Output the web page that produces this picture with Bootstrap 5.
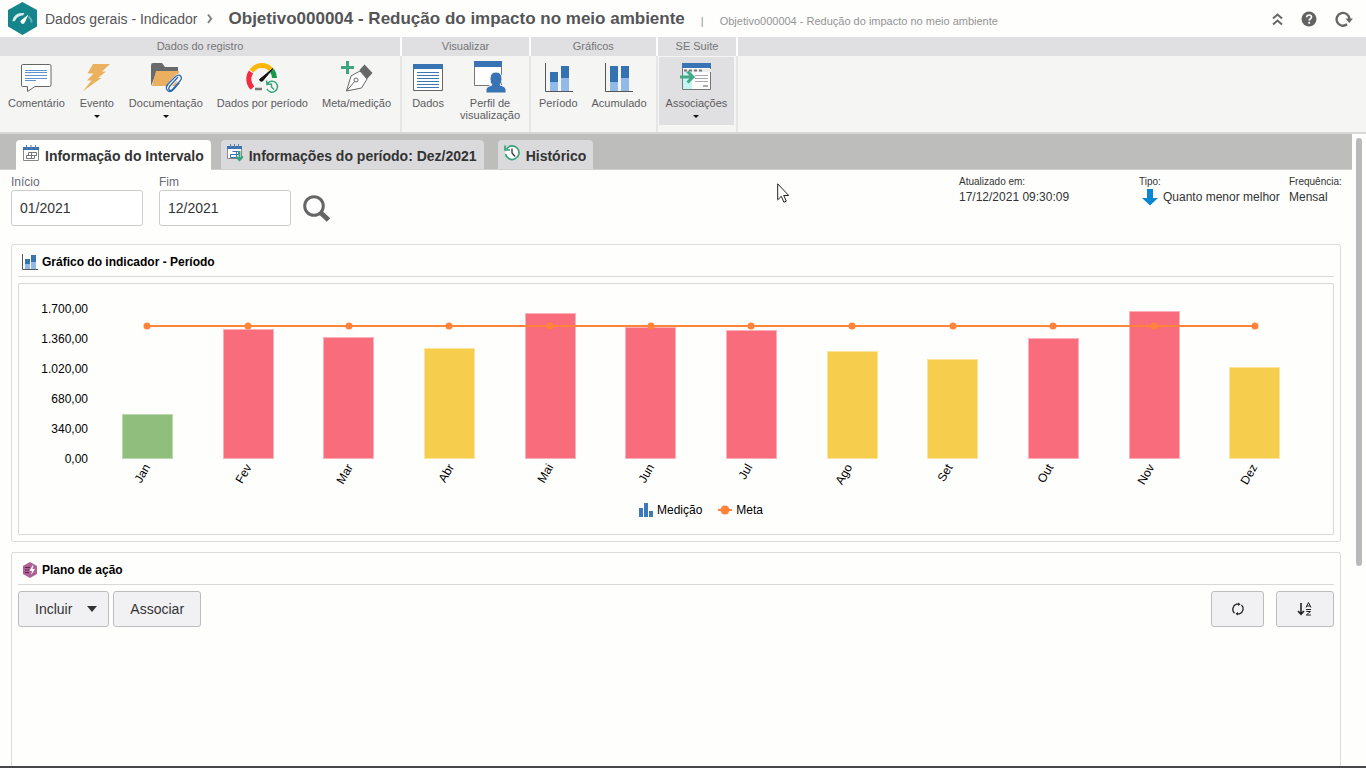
<!DOCTYPE html>
<html lang="pt-BR">
<head>
<meta charset="utf-8">
<meta name="viewport" content="width=device-width, initial-scale=1">
<title>Dados gerais - Indicador</title>
<link href="https://cdn.jsdelivr.net/npm/bootstrap@5.3.0/dist/css/bootstrap.min.css" rel="stylesheet">
<style>
body{font-family:"Liberation Sans",Arial,sans-serif;font-size:12px;line-height:16px;color:#333;background:#fefefd}
svg{display:block;flex:none}
a{color:inherit;text-decoration:none}
.btn{--bs-btn-font-size:14px;--bs-btn-line-height:20px;--bs-btn-border-radius:3px}
/* top bar */
.topbar{height:37px;padding:0 13px 0 8px;color:#555558}
.topbar-tools{gap:18px}
.crumb{font-size:14px;line-height:20px;padding:0 8px}
.page-title{font-size:17px;line-height:20px;font-weight:700;margin:1px 0 0 15px;color:#555557}
.page-sub{font-size:11px;color:#939394;padding-top:5px;gap:16px;margin-left:16px}
.tool-btn{border:0;background:none;padding:0}
/* ribbon */
.ribbon{background:#f5f5f4;height:97px;border-bottom:2px solid #d7d7d7}
.ribbon-title{height:19px;background:#e0e0e2;color:#757577;font-size:11px;line-height:19px;text-align:center;border-right:2px solid #fdfdfd}
.ribbon-items{padding:1px 2px 1px 1px;border-right:2px solid #e6e6e6}
.ribbon-fill .ribbon-title{border-right:0}
.ribbon-btn{border:0;background:none;border-radius:0;min-width:50px;height:68px;padding:3px 7px 0;font-size:11px;line-height:12px;color:#5c5c5e}
.ribbon-btn svg.pic{margin-bottom:2px}
.ribbon-btn.active{background:#e0dfe1}
.tri{width:0;height:0;border:3px solid transparent;border-top-color:#111;border-bottom:0;margin-top:6px}
/* tabs */
.tabband{height:36px;background:#bdbdbb;padding-left:16px;gap:10px;border-bottom:1px solid #cfcfce}
.tabband .nav-link{height:29px;padding:0 7px 0 6px;gap:6px;border-radius:4px 4px 0 0;background:#dadadc;color:#333;font-size:14px;font-weight:700;line-height:32px}
.tabband .nav-link.active{height:30px;background:#fefefd;margin-bottom:-1px;padding-left:7px}
/* filter */
.sheet{padding:4px 11px 0;gap:10px}
.filters{gap:16px;height:60px}
.field-label{line-height:16px;color:#6a6a78;display:block}
.date-box{width:132px;height:36px;border:1px solid #ccc;border-radius:3px;font-size:14px;padding:0 8px;color:#333}
.find-btn{margin:20px 0 0 -6px}
.meta-item dt{font-size:10px;font-weight:400;line-height:15px}
.meta-item dd{margin:0;line-height:17px}
.w-upd{width:180px}.w-tipo{width:150px}.w-freq{width:52px;white-space:nowrap}
/* panels */
.panel{border:1px solid #dcdada;border-radius:3px;background:#fefefd;padding:0 6px}
.panel-head{height:32px;border-bottom:1px solid #d9d9d9;padding:3px 0 0 4px;gap:4px;font-size:12px;font-weight:700;color:#000;margin:0}
.chart-box{border:1px solid #d9d9d9;border-radius:2px;margin:6px 0;padding:17px 28px 16px 0;color:#000}
.y-axis{width:78px;padding-right:9px;text-align:right}
.y-axis span{line-height:16px;height:30px}
.y-axis span:last-child{height:16px}
.plot{height:150px;margin-top:8px}
.goal{left:calc(100%/24);right:calc(100%/24);height:2px;background:#ff8338;transform:translateY(50%)}
.dot{left:50%;width:7px;height:7px;border-radius:50%;background:#ff8338;transform:translate(-50%,50%)}
.bar{width:51px;border:1px solid #fbb0ba;background:#f86c7c}
.bar.ok{background:#8fbe7d;border-color:#bcd8b0}
.bar.warn{background:#f7cd4d;border-color:#fbe3a0}
.month{width:50%;text-align:right;line-height:12px;height:43px}
.month span{display:block;transform:rotate(-60deg);transform-origin:100% 50%}
.legend-row{gap:16px;margin-left:78px}
.action-row{padding-top:6px}
.btn-tool{--bs-btn-bg:#f1f1f4;--bs-btn-border-color:#bdbdc0;--bs-btn-color:#333;--bs-btn-padding-x:16px;--bs-btn-padding-y:7px;--bs-btn-hover-bg:#e6e6ea;height:36px}
.btn-inc{padding-right:11px}
.tri-lg{width:0;height:0;border:5px solid transparent;border-top:6px solid #333;border-bottom:0;margin-left:15px}
.w-ref{width:53px;padding:0}.w-sort{width:58px;padding:0}
.scroller{width:14px;padding:4px 4px 200px}
.thumb{width:6px;border-radius:3px;background:#b9b9bc}
.statusline{height:2px;background:#47484a}
.pointer{position:fixed;left:777px;top:183px;pointer-events:none}
</style>
</head>
<body class="vh-100 d-flex flex-column overflow-hidden">
<header class="topbar d-flex align-items-center flex-shrink-0">
  <svg width="29" height="33" viewBox="0 0 29 33"><path d="M14.500 0 29 8v16.500L14.500 33 0 24.500V8z" fill="#15858c"/><path d="M4.500 19.500C5 14 9 11 13.500 11h3L15 13.500C11 13.500 8 16 7 19z" fill="#d5edef"/><path d="M13 21c-1-1.500-.5-2.500 1-3.500l6.500-5-3.500 7.500c-1 2-2.500 2.500-4 1z" fill="#fff"/><path d="M20.500 14.500c2 1.500 3 3.500 3 6" fill="none" stroke="#66b3b8" stroke-width="2"/></svg>
  <a href="#" class="crumb">Dados gerais - Indicador</a>
  <svg width="8" height="12" viewBox="0 0 8 12"><path d="m2 1.500 3.200 4.200L2 10" fill="none" stroke="#858587" stroke-width="2"/></svg>
  <h1 class="page-title text-nowrap">Objetivo000004 - Redução do impacto no meio ambiente</h1>
  <div class="page-sub d-flex text-nowrap"><span>|</span><span>Objetivo000004 - Redução do impacto no meio ambiente</span></div>
  <div class="topbar-tools ms-auto d-flex align-items-center">
    <button class="tool-btn" aria-label="Recolher"><svg width="11" height="14" viewBox="0 0 11 14"><path d="M1 6.500 5.500 2.500 10 6.500M1 12.500 5.500 8.500 10 12.500" fill="none" stroke="#666" stroke-width="2"/></svg></button>
    <button class="tool-btn" aria-label="Ajuda"><svg width="16" height="16" viewBox="0 0 16 16"><circle cx="8" cy="8" r="7.500" fill="#636363"/><path d="M5.700 6.200C5.800 4.500 7 4 8.100 4c1.300 0 2.400.7 2.400 2.100 0 1.600-2.300 1.700-2.300 3.500M8.200 10.800v2" fill="none" stroke="#fff" stroke-width="1.700"/></svg></button>
    <button class="tool-btn" aria-label="Atualizar"><svg width="18" height="16" viewBox="0 0 18 16"><path d="M12 13.300A6.400 6.400 0 1 1 14.400 8" fill="none" stroke="#666" stroke-width="2.400"/><path d="M10.500 7.500h7.500l-3.800 4.500z" fill="#666"/></svg></button>
  </div>
</header>

<nav class="ribbon d-flex flex-shrink-0" aria-label="Ações">
  <section class="d-flex flex-column">
    <div class="ribbon-title">Dados do registro</div>
    <div class="ribbon-items d-flex flex-grow-1">
      <button class="ribbon-btn d-flex flex-column align-items-center"><svg class="pic" width="36" height="35" viewBox="0 0 36 35"><path d="M4.500 4.500h27q1.500 0 1.500 1.500v19q0 1.500-1.500 1.500H17L9.500 31.500v-5h-5Q3.500 26.500 3.500 25V6q0-1.500 1-1.500z" fill="#fff" stroke="#666"/><path d="M7 10.500h22M7 12.500h22M7 15.500h22M7 18.500h22M7 20.500h11" stroke="#5f95cc"/></svg>Comentário</button>
      <button class="ribbon-btn d-flex flex-column align-items-center"><svg class="pic" width="36" height="35" viewBox="0 0 36 35"><path d="M14 4h17l-8 7.500h4l-8 6.500h3.500L4 31l8.500-10.500H8l6.500-7H8.500z" fill="#eab15f"/></svg>Evento<span class="tri"></span></button>
      <button class="ribbon-btn d-flex flex-column align-items-center"><svg class="pic" width="36" height="35" viewBox="0 0 36 35"><path d="M3 26V5q0-2 2-2h9l3 4h13v4H9z" fill="#6a6a6a"/><path d="M8 11h23l-3 15H4z" fill="#eab060"/><path d="m31 16-10 11q-2 3 0 4.500t4-1l7.500-8.500q2-3 0-5.500-2.500-2-5 .500l-7 7.500" fill="none" stroke="#fff" stroke-width="3"/><path d="m30 17-8.500 9.500q-1.500 2.500 0 3.500t3-.500l7.500-8.500q2.500-3 .500-5t-5 .500L20 24q-3 4-.500 6.500 3 2.500 6-1l6-7" fill="none" stroke="#2c66ac" stroke-width="1.300"/></svg>Documentação<span class="tri"></span></button>
      <button class="ribbon-btn d-flex flex-column align-items-center"><svg class="pic" width="36" height="35" viewBox="0 0 36 35"><path d="M8.500 28A12.500 12.500 0 0 1 7 12" fill="none" stroke="#f22b40" stroke-width="5"/><path d="M7.500 11A12.500 12.500 0 0 1 27 9.500" fill="none" stroke="#fcb608" stroke-width="5"/><path d="M28 10.500q2.500 3.500 2.500 7.500" fill="none" stroke="#179a49" stroke-width="5"/><path d="M29 8.500 18.500 21q-2.500 1-3-1.500z" fill="#111" stroke="#111"/><path d="M11 29h7" stroke="#777" stroke-width="2.500"/><circle cx="28" cy="26.500" r="7.500" fill="#f5f5f4"/><path d="M23.500 23.500A5.500 5.500 0 1 1 23 29M22.500 20.500l.5 4 4-.5" fill="none" stroke="#35a37c" stroke-width="1.400"/><path d="M27.500 23.500v3.500l2.500 2.500" fill="none" stroke="#35a37c" stroke-width="1.400"/></svg>Dados por período</button>
      <button class="ribbon-btn d-flex flex-column align-items-center"><svg class="pic" width="36" height="35" viewBox="0 0 36 35"><path d="M8.500 1v13M2 7.500h13" stroke="#3fa57e" stroke-width="3"/><path d="M7.500 31 12 16l9-5 7 8-5.500 9z" fill="#fff" stroke="#666"/><path d="m7.500 31 8.500-10" stroke="#666"/><circle cx="17" cy="20" r="2" fill="#fff" stroke="#666"/><path d="m20.500 10 5-5.500L33.500 13 28 19z" fill="#676767"/></svg>Meta/medição</button>
    </div>
  </section>
  <section class="d-flex flex-column">
    <div class="ribbon-title">Visualizar</div>
    <div class="ribbon-items d-flex flex-grow-1">
      <button class="ribbon-btn d-flex flex-column align-items-center"><svg class="pic" width="36" height="35" viewBox="0 0 36 35"><path d="M3.500 4.500h29v26h-29z" fill="#fff" stroke="#666"/><path d="M3 4h30v5H3z" fill="#3874b4"/><path d="M7 12.500h22M7 15.500h22M7 18.500h22M7 21.500h22M7 24.500h22M7 27.500h22" stroke="#3b78b8"/></svg>Dados</button>
      <button class="ribbon-btn d-flex flex-column align-items-center"><svg class="pic" width="36" height="35" viewBox="0 0 36 35"><path d="M2.500 2.500h27v23h-27z" fill="#fff" stroke="#777"/><path d="M2 1h28v6H2z" fill="#3874b4"/><path d="M14 33v-4q1-3 6-4-2-2-2-6 0-7 6-7t6 7q0 4-2 6 5 1 6 4v4z" fill="#3874b4" stroke="#f5f5f4"/></svg>Perfil de<br>visualização</button>
    </div>
  </section>
  <section class="d-flex flex-column">
    <div class="ribbon-title">Gráficos</div>
    <div class="ribbon-items d-flex flex-grow-1">
      <button class="ribbon-btn d-flex flex-column align-items-center"><svg class="pic" width="36" height="35" viewBox="0 0 36 35"><path d="M5.500 3v28.500H33" fill="none" stroke="#555"/><path d="M10 12h8v10h-8zM21 6h8v12h-8z" fill="#3572b2"/><path d="M10 22h8v9h-8zM21 18h8v13h-8z" fill="#92bae8"/></svg>Período</button>
      <button class="ribbon-btn d-flex flex-column align-items-center"><svg class="pic" width="36" height="35" viewBox="0 0 36 35"><path d="M4.500 3v28.500H32" fill="none" stroke="#555"/><path d="M9 6h8v16H9zM20 6h8v12h-8z" fill="#3572b2"/><path d="M9 22h8v9H9zM20 18h8v13h-8z" fill="#92bae8"/></svg>Acumulado</button>
    </div>
  </section>
  <section class="d-flex flex-column">
    <div class="ribbon-title">SE Suite</div>
    <div class="ribbon-items d-flex flex-grow-1">
      <button class="ribbon-btn active d-flex flex-column align-items-center"><svg class="pic" width="36" height="35" viewBox="0 0 36 35"><path d="M4.500 4.500h28v25h-28z" fill="#fff" stroke="#777"/><path d="M4 3h29v5H4z" fill="#3874b4"/><path d="M5 9h28v3H5z" fill="#ececec"/><path d="M6 10.500h20" stroke="#777" stroke-width="2" stroke-dasharray="3 2"/><path d="M5 12h9v17H5z" fill="#c4f4f3"/><path d="M17 15.500h13M17 18.500h13M17 21.500h13" stroke="#aaa"/><path d="M25 26h5" stroke="#aaa" stroke-width="2"/><path d="M2 17h12M9.500 11.500l5.500 5.500-5.500 5.500" fill="none" stroke="#42a984" stroke-width="3"/></svg>Associações<span class="tri"></span></button>
    </div>
  </section>
  <section class="ribbon-fill flex-grow-1"><div class="ribbon-title"></div></section>
</nav>

<div class="d-flex flex-grow-1 overflow-hidden">
  <main class="d-flex flex-column flex-grow-1 overflow-hidden">
    <div class="nav tabband d-flex flex-nowrap align-items-end flex-shrink-0" role="tablist">
      <a href="#" class="nav-link active d-flex" role="tab"><svg class="mt-1" width="16" height="20" viewBox="0 0 16 20"><path d="M.5 4.500h15v12H.5z" fill="#fff" stroke="#888"/><path d="M0 3h16v3H0z" fill="#3874b4"/><path d="M3.500 1v4M12.500 1v4M8 1v4" stroke="#5a7fa8"/><path d="M5.500 8.500h8v3h-8zM3.500 11.500h8v3h-8zM8.500 8.500v6" fill="none" stroke="#777"/></svg>Informação do Intervalo</a>
      <a href="#" class="nav-link d-flex" role="tab"><svg class="mt-1" width="16" height="20" viewBox="0 0 16 20"><path d="M.5 3.500h14v11H.5z" fill="#fff" stroke="#888"/><path d="M0 2h15v3H0z" fill="#3874b4"/><path d="M3.500 0v4M11.500 0v4M7.500 0v4" stroke="#5a7fa8"/><path d="M5.500 7.500h6v3h-8v3h6v-6" fill="none" stroke="#3874b4"/><path d="M12.500 7v9M9 12.500l3.500 3.500 3.500-3.500" fill="none" stroke="#35a37c" stroke-width="2"/></svg>Informações do período: Dez/2021</a>
      <a href="#" class="nav-link d-flex ms-1" role="tab"><svg class="mt-1" width="16" height="20" viewBox="0 0 16 20"><circle cx="8.500" cy="9" r="7" fill="#fff"/><path d="M2.500 5a6.800 6.800 0 1 1-1 5M1 1.500v4.500h5" fill="none" stroke="#35a37c" stroke-width="1.700"/><path d="M8 4.500V9l3 3.500" fill="none" stroke="#333" stroke-width="1.300"/></svg>Histórico</a>
    </div>
    <div class="sheet d-flex flex-column flex-grow-1">
      <form class="filters d-flex align-items-start">
        <div><label class="field-label" for="ini">Início</label><input id="ini" class="date-box" value="01/2021"></div>
        <div><label class="field-label" for="fim">Fim</label><input id="fim" class="date-box" value="12/2021"></div>
        <button type="button" class="tool-btn find-btn" aria-label="Pesquisar"><svg width="30" height="30" viewBox="0 0 30 30"><circle cx="13" cy="12" r="9.300" fill="#fff" stroke="#666" stroke-width="3"/><path d="m20 19 7.500 7" stroke="#666" stroke-width="5"/></svg></button>
        <dl class="d-flex ms-auto mb-0 meta-item">
          <div class="w-upd"><dt>Atualizado em:</dt><dd>17/12/2021 09:30:09</dd></div>
          <div class="w-tipo"><dt>Tipo:</dt><dd class="d-flex gap-1"><svg width="20" height="17" viewBox="0 0 20 17"><path d="M8 0h6v9h5l-8 7.500L3 9h5z" fill="#0a86d2"/></svg>Quanto menor melhor</dd></div>
          <div class="w-freq"><dt>Frequência:</dt><dd>Mensal</dd></div>
        </dl>
      </form>
      <section class="panel">
        <h2 class="panel-head d-flex align-items-center"><svg width="16" height="16" viewBox="0 0 16 16"><path d="M.5 0v15.500H16" fill="none" stroke="#555"/><path d="M3 5h5v6H3zM9 1h5v8H9z" fill="#3874b4"/><path d="M3 10h5v5H3zM9 8h5v7H9z" fill="#92bae8"/></svg>Gráfico do indicador - Período</h2>
        <div class="chart-box">
          <div class="d-flex">
            <div class="y-axis d-flex flex-column"><span>1.700,00</span><span>1.360,00</span><span>1.020,00</span><span>680,00</span><span>340,00</span><span>0,00</span></div>
            <div class="flex-grow-1">
              <div id="plot" class="plot d-flex position-relative"></div>
              <div id="months" class="d-flex"></div>
            </div>
          </div>
          <div class="legend-row d-flex justify-content-center">
            <span class="d-flex align-items-center gap-1"><svg width="14" height="14" viewBox="0 0 14 14"><path d="M0 5h4v9H0zM5 0h4v14H5zM10 8h4v6h-4z" fill="#3c7abc"/></svg>Medição</span>
            <span class="d-flex align-items-center gap-1"><svg width="14" height="10" viewBox="0 0 14 10"><path d="M0 5h14" stroke="#ff8338" stroke-width="2"/><circle cx="7" cy="5" r="4.500" fill="#ff8338"/></svg>Meta</span>
          </div>
        </div>
      </section>
      <section class="panel flex-grow-1 border-bottom-0 rounded-bottom-0">
        <h2 class="panel-head d-flex align-items-center"><svg width="16" height="16" viewBox="0 0 16 16"><path d="m8 0 7 4v8l-7 4-7-4V4z" fill="#ad6197"/><path d="M3 5.500h5M3 8h4M3 10.500h4" stroke="#5e2450"/><path d="M10.500 3.500 7.500 9H10l-1 4 4-6h-2.500l1-3.500z" fill="#fff"/></svg>Plano de ação</h2>
        <div class="action-row d-flex gap-1">
          <button class="btn btn-tool btn-inc d-flex align-items-center">Incluir<span class="tri-lg"></span></button>
          <button class="btn btn-tool">Associar</button>
          <button class="btn btn-tool w-ref d-flex align-items-center justify-content-center ms-auto" aria-label="Atualizar"><svg width="14" height="14" viewBox="0 0 14 14"><path d="M3.500 11A5.200 5.200 0 0 1 5.500 2.200h2M10.500 3A5.200 5.200 0 0 1 8.500 11.800h-2" fill="none" stroke="#222" stroke-width="1.300"/><path d="M7 .5v3.600l2.600-1.800zM7 9.900v3.600l-2.600-1.800z" fill="#222"/></svg></button>
          <button class="btn btn-tool w-sort d-flex align-items-center justify-content-center ms-2" aria-label="Ordenar"><svg width="16" height="14" viewBox="0 0 16 14"><path d="M4 1v11M1 9l3 3.300L7 9" fill="none" stroke="#222" stroke-width="1.600"/><path d="m9 5.500 2.500-5 2.500 5M9.800 4h3.400M9 7.500h5M9.300 9.500h4.200L9.300 13h4.700" fill="none" stroke="#222"/></svg></button>
        </div>
      </section>
    </div>
  </main>
  <div class="scroller d-flex" aria-hidden="true"><div class="thumb"></div></div>
</div>
<div class="statusline flex-shrink-0"></div>
<svg class="pointer" width="13" height="21" viewBox="0 0 13 21"><path d="M.7.8v16l3.600-3.500 2.600 5.900 2.400-1-2.600-5.700h5z" fill="#fff" stroke="#222"/></svg>
<script src="https://cdn.jsdelivr.net/npm/bootstrap@5.3.0/dist/js/bootstrap.bundle.min.js"></script>
<script>
const MAX=1700, GOAL=1510;
const data=[['Jan',510,'ok'],['Fev',1470,''],['Mar',1380,''],['Abr',1255,'warn'],['Mai',1655,''],['Jun',1500,''],['Jul',1460,''],['Ago',1225,'warn'],['Set',1130,'warn'],['Out',1370,''],['Nov',1675,''],['Dez',1040,'warn']];
const pct=v=>(v/MAX*100).toFixed(2)+'%';
plot.innerHTML=data.map(([m,v,c])=>`<div class="flex-fill d-flex align-items-end justify-content-center position-relative" style="flex-basis:0"><div class="bar ${c}" style="height:${pct(v)}"></div><span class="dot position-absolute" style="bottom:${pct(GOAL)}"></span></div>`).join('')
 +`<div class="goal position-absolute" style="bottom:${pct(GOAL)}"></div>`;
months.innerHTML=data.map(([m])=>`<div class="flex-fill" style="flex-basis:0"><div class="month"><span>${m}</span></div></div>`).join('');
</script>
</body>
</html>
